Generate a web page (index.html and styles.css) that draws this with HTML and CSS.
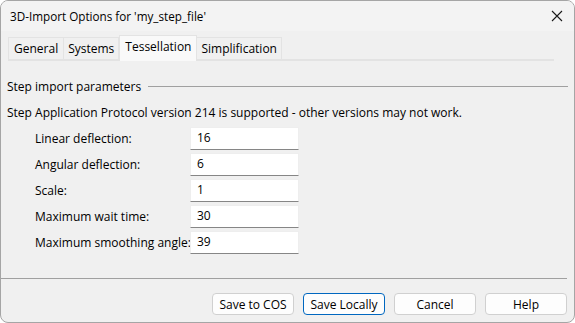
FILE: index.html
```html
<!DOCTYPE html>
<html lang="en">
<head>
  <meta charset="UTF-8" />
  <title>3D-Import Options</title>
  <link rel="stylesheet" href="styles.css">
</head>
<body>
  <div class="dialog">
    <div class="titlebar">
      <span class="title">3D-Import Options for 'my_step_file'</span>
      <svg class="close" width="12" height="12" viewBox="0 0 12 12">
        <path d="M1 1 L11 11 M11 1 L1 11" stroke="#1a1a1a" stroke-width="1.1" fill="none" />
      </svg>
    </div>

    <div class="content">
      <div class="tabs">
        <div class="tab">General</div>
        <div class="tab">Systems</div>
        <div class="tab active">Tessellation</div>
        <div class="tab">Simplification</div>
      </div>

      <div class="group">
        <span class="group-title">Step import parameters</span>
        <span class="group-line"></span>
      </div>

      <p class="note">Step Application Protocol version 214 is supported - other versions may not work.</p>

      <div class="fields">
        <label for="linear">Linear deflection:</label>
        <input type="text" id="linear" value="16" />
        <label for="angular">Angular deflection:</label>
        <input type="text" id="angular" value="6" />
        <label for="scale">Scale:</label>
        <input type="text" id="scale" value="1" />
        <label for="wait">Maximum wait time:</label>
        <input type="text" id="wait" value="30" />
        <label for="smooth">Maximum smoothing angle:</label>
        <input type="text" id="smooth" value="39" />
      </div>
    </div>

    <div class="footer">
      <button>Save to COS</button>
      <button class="default">Save Locally</button>
      <button>Cancel</button>
      <button>Help</button>
    </div>
  </div>
</body>
</html>
```

FILE: styles.css
```css
* { box-sizing: border-box; margin: 0; padding: 0; }
html, body { width: 575px; height: 323px; overflow: hidden; }
body {
  background: #fff;
  font-family: "Open Sans", "Noto Sans", sans-serif;
  font-size: 12px;
  color: #000;
}
.dialog {
  width: 575px; height: 323px;
  border: 1px solid #a5a5a5;
  border-radius: 8px;
  background: #f0f0f0;
  overflow: hidden;
  display: flex; flex-direction: column;
}
.titlebar {
  height: 30px;
  background: #f3f3f3;
  display: flex; align-items: center; justify-content: space-between;
  padding: 0 10px 0 9px;
  flex-shrink: 0;
}
.title { font-size: 11.7px; }
.close { margin-right: 1px; }

.content { flex: 1; padding: 6px 0 0 0; }
.tabs {
  display: flex;
  align-items: flex-end;
  height: 24px;
  margin: 0 7px 0 7px;
  border-bottom: 2px solid #e3e3e3;
  width: 546px;
}
.tab {
  height: 22px;
  padding: 0 4px;
  line-height: 21px;
  border: 1px solid #e3e3e3;
  border-bottom: none;
  border-left: none;
  background: #f0f0f0;
  color: #000;
  white-space: nowrap;
}
.tab:first-child { border-left: 1px solid #e3e3e3; padding: 0 5px; }
.tab.active {
  line-height: 21px;
  background: #f9f9f9;
  border-left: 1px solid #e3e3e3;
  margin-bottom: -2px;
  height: 26px;
  padding: 0 5px;
}

.group {
  display: flex; align-items: center;
  gap: 7px;
  margin: 17px 6px 0 6px;
}
.group-line { flex: 1; height: 1px; background: #a0a0a0; }

.note { margin: 9px 0 0 6px; }

.fields {
  display: grid;
  grid-template-columns: 155px 109px;
  row-gap: 3px;
  align-items: center;
  margin: 6px 0 0 34px;
}
.fields label { white-space: nowrap; }
.fields input {
  height: 23px;
  border: 1px solid #eeeeee;
  border-bottom: 1px solid #868686;
  background: #fff;
  font: inherit;
  padding: 0 6px 2px 6px;
  outline: none;
}

.footer {
  height: 44px;
  border-top: 1px solid #a0a0a0;
  margin-right: 7px;
  display: flex; align-items: flex-start; justify-content: flex-end;
  gap: 9px;
  padding-top: 14px;
  flex-shrink: 0;
}
.footer button {
  width: 82px; height: 22px;
  background: #fdfdfd;
  border: 1px solid #d0d0d0;
  border-radius: 4px;
  font: inherit;
  color: #000;
}
.footer button.default { border-color: #0067c0; }
```
